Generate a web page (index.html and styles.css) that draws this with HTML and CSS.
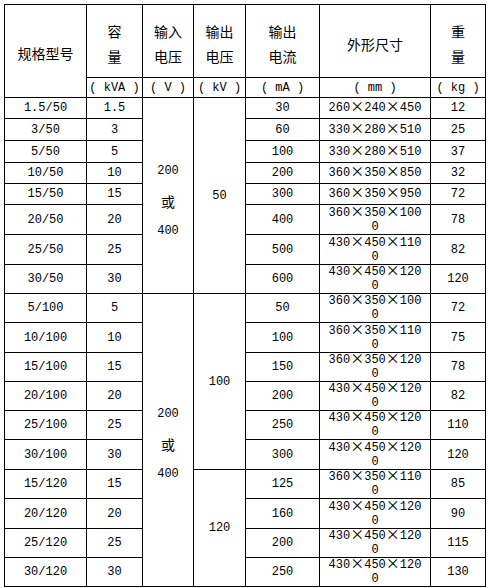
FILE: index.html
```html
<!DOCTYPE html>
<html lang="zh-CN">
<head>
<meta charset="utf-8">
<title>规格型号</title>
<link rel="stylesheet" href="styles.css">
</head>
<body>
<table class="spec">
  <colgroup>
    <col class="c1"><col class="c2"><col class="c3"><col class="c4"><col class="c5"><col class="c6"><col class="c7">
  </colgroup>
  <thead>
    <tr class="h73">
      <th rowspan="2" class="hd hd-model">规格型号</th>
      <th class="hd">容<br>量</th>
      <th class="hd">输入<br>电压</th>
      <th class="hd">输出<br>电压</th>
      <th class="hd">输出<br>电流</th>
      <th class="hd hd-one">外形尺寸</th>
      <th class="hd">重<br>量</th>
    </tr>
    <tr class="h20">
      <th class="unit">( kVA )</th>
      <th class="unit">( V )</th>
      <th class="unit">( kV )</th>
      <th class="unit">( mA )</th>
      <th class="unit">( mm )</th>
      <th class="unit">( kg )</th>
    </tr>
  </thead>
  <tbody>
    <tr class="h21"><td>1.5/50</td><td>1.5</td><td rowspan="8" class="vin vin-a">200<br><span class="cjk">或</span><br>400</td><td rowspan="8">50</td><td>30</td><td>260<span class="x">×</span>240<span class="x">×</span>450</td><td>12</td></tr>
    <tr class="h22"><td>3/50</td><td>3</td><td>60</td><td>330<span class="x">×</span>280<span class="x">×</span>510</td><td>25</td></tr>
    <tr class="h22"><td>5/50</td><td>5</td><td>100</td><td>330<span class="x">×</span>280<span class="x">×</span>510</td><td>37</td></tr>
    <tr class="h21"><td>10/50</td><td>10</td><td>200</td><td>360<span class="x">×</span>350<span class="x">×</span>850</td><td>32</td></tr>
    <tr class="h21"><td>15/50</td><td>15</td><td>300</td><td>360<span class="x">×</span>350<span class="x">×</span>950</td><td>72</td></tr>
    <tr class="h30"><td>20/50</td><td>20</td><td>400</td><td class="dim">360<span class="x">×</span>350<span class="x">×</span>100<br>0</td><td>78</td></tr>
    <tr class="h30"><td>25/50</td><td>25</td><td>500</td><td class="dim">430<span class="x">×</span>450<span class="x">×</span>110<br>0</td><td>82</td></tr>
    <tr class="h29"><td>30/50</td><td>30</td><td>600</td><td class="dim">430<span class="x">×</span>450<span class="x">×</span>120<br>0</td><td>120</td></tr>

    <tr class="h29"><td>5/100</td><td>5</td><td rowspan="10" class="vin vin-b">200<br><span class="cjk">或</span><br>400</td><td rowspan="6">100</td><td>50</td><td class="dim">360<span class="x">×</span>350<span class="x">×</span>100<br>0</td><td>72</td></tr>
    <tr class="h30"><td>10/100</td><td>10</td><td>100</td><td class="dim">360<span class="x">×</span>350<span class="x">×</span>110<br>0</td><td>75</td></tr>
    <tr class="h29"><td>15/100</td><td>15</td><td>150</td><td class="dim">360<span class="x">×</span>350<span class="x">×</span>120<br>0</td><td>78</td></tr>
    <tr class="h28"><td>20/100</td><td>20</td><td>200</td><td class="dim">430<span class="x">×</span>450<span class="x">×</span>120<br>0</td><td>82</td></tr>
    <tr class="h29"><td>25/100</td><td>25</td><td>250</td><td class="dim">430<span class="x">×</span>450<span class="x">×</span>120<br>0</td><td>110</td></tr>
    <tr class="h30"><td>30/100</td><td>30</td><td>300</td><td class="dim">430<span class="x">×</span>450<span class="x">×</span>120<br>0</td><td>120</td></tr>
    <tr class="h29"><td>15/120</td><td>15</td><td rowspan="4">120</td><td>125</td><td class="dim">360<span class="x">×</span>350<span class="x">×</span>110<br>0</td><td>85</td></tr>
    <tr class="h30"><td>20/120</td><td>20</td><td>160</td><td class="dim">430<span class="x">×</span>450<span class="x">×</span>120<br>0</td><td>90</td></tr>
    <tr class="h29"><td>25/120</td><td>25</td><td>200</td><td class="dim">430<span class="x">×</span>450<span class="x">×</span>120<br>0</td><td>115</td></tr>
    <tr class="h28"><td>30/120</td><td>30</td><td>250</td><td class="dim">430<span class="x">×</span>450<span class="x">×</span>120<br>0</td><td>130</td></tr>
  </tbody>
</table>
</body>
</html>
```

FILE: styles.css
```css
html, body {
  margin: 0;
  padding: 0;
  background: #fff;
}

body {
  padding: 4px;
  color: #000;
  font-family: "Liberation Mono", "Noto Sans CJK SC", monospace;
  font-size: 12px;
}

.spec {
  border-collapse: collapse;
  table-layout: fixed;
  width: 482px;
}

.c1 { width: 82px; }
.c2 { width: 56px; }
.c3 { width: 51px; }
.c4 { width: 52px; }
.c5 { width: 74px; }
.c6 { width: 111px; }
.c7 { width: 55px; }

.spec th,
.spec td {
  border: 1px solid #000;
  padding: 0;
  text-align: center;
  vertical-align: middle;
  font-weight: normal;
  line-height: 14px;
  white-space: nowrap;
}

.h73 { height: 73px; }
.h20 { height: 20px; }
.h21 { height: 21px; }
.h22 { height: 22px; }
.h28 { height: 28px; }
.h29 { height: 29px; }
.h30 { height: 30px; }

.spec .hd {
  font-family: "Noto Sans CJK SC", sans-serif;
  font-size: 14px;
  line-height: 25px;
  padding-top: 6px;
}

.spec .hd-model {
  padding-top: 5px;
}

.spec .hd-one {
  padding-top: 7px;
}

.spec .unit {
  font-size: 12px;
}

.spec .vin {
  line-height: 30px;
}

.spec .vin-a { padding-top: 11px; }
.spec .vin-b { padding-top: 8px; }

.cjk {
  display: inline-block;
  vertical-align: top;
  font-family: "Noto Sans CJK SC", sans-serif;
  font-size: 14px;
  line-height: 30px;
}

.x {
  font-family: "Noto Sans CJK SC", sans-serif;
  font-size: 14px;
  line-height: 0;
}
```
